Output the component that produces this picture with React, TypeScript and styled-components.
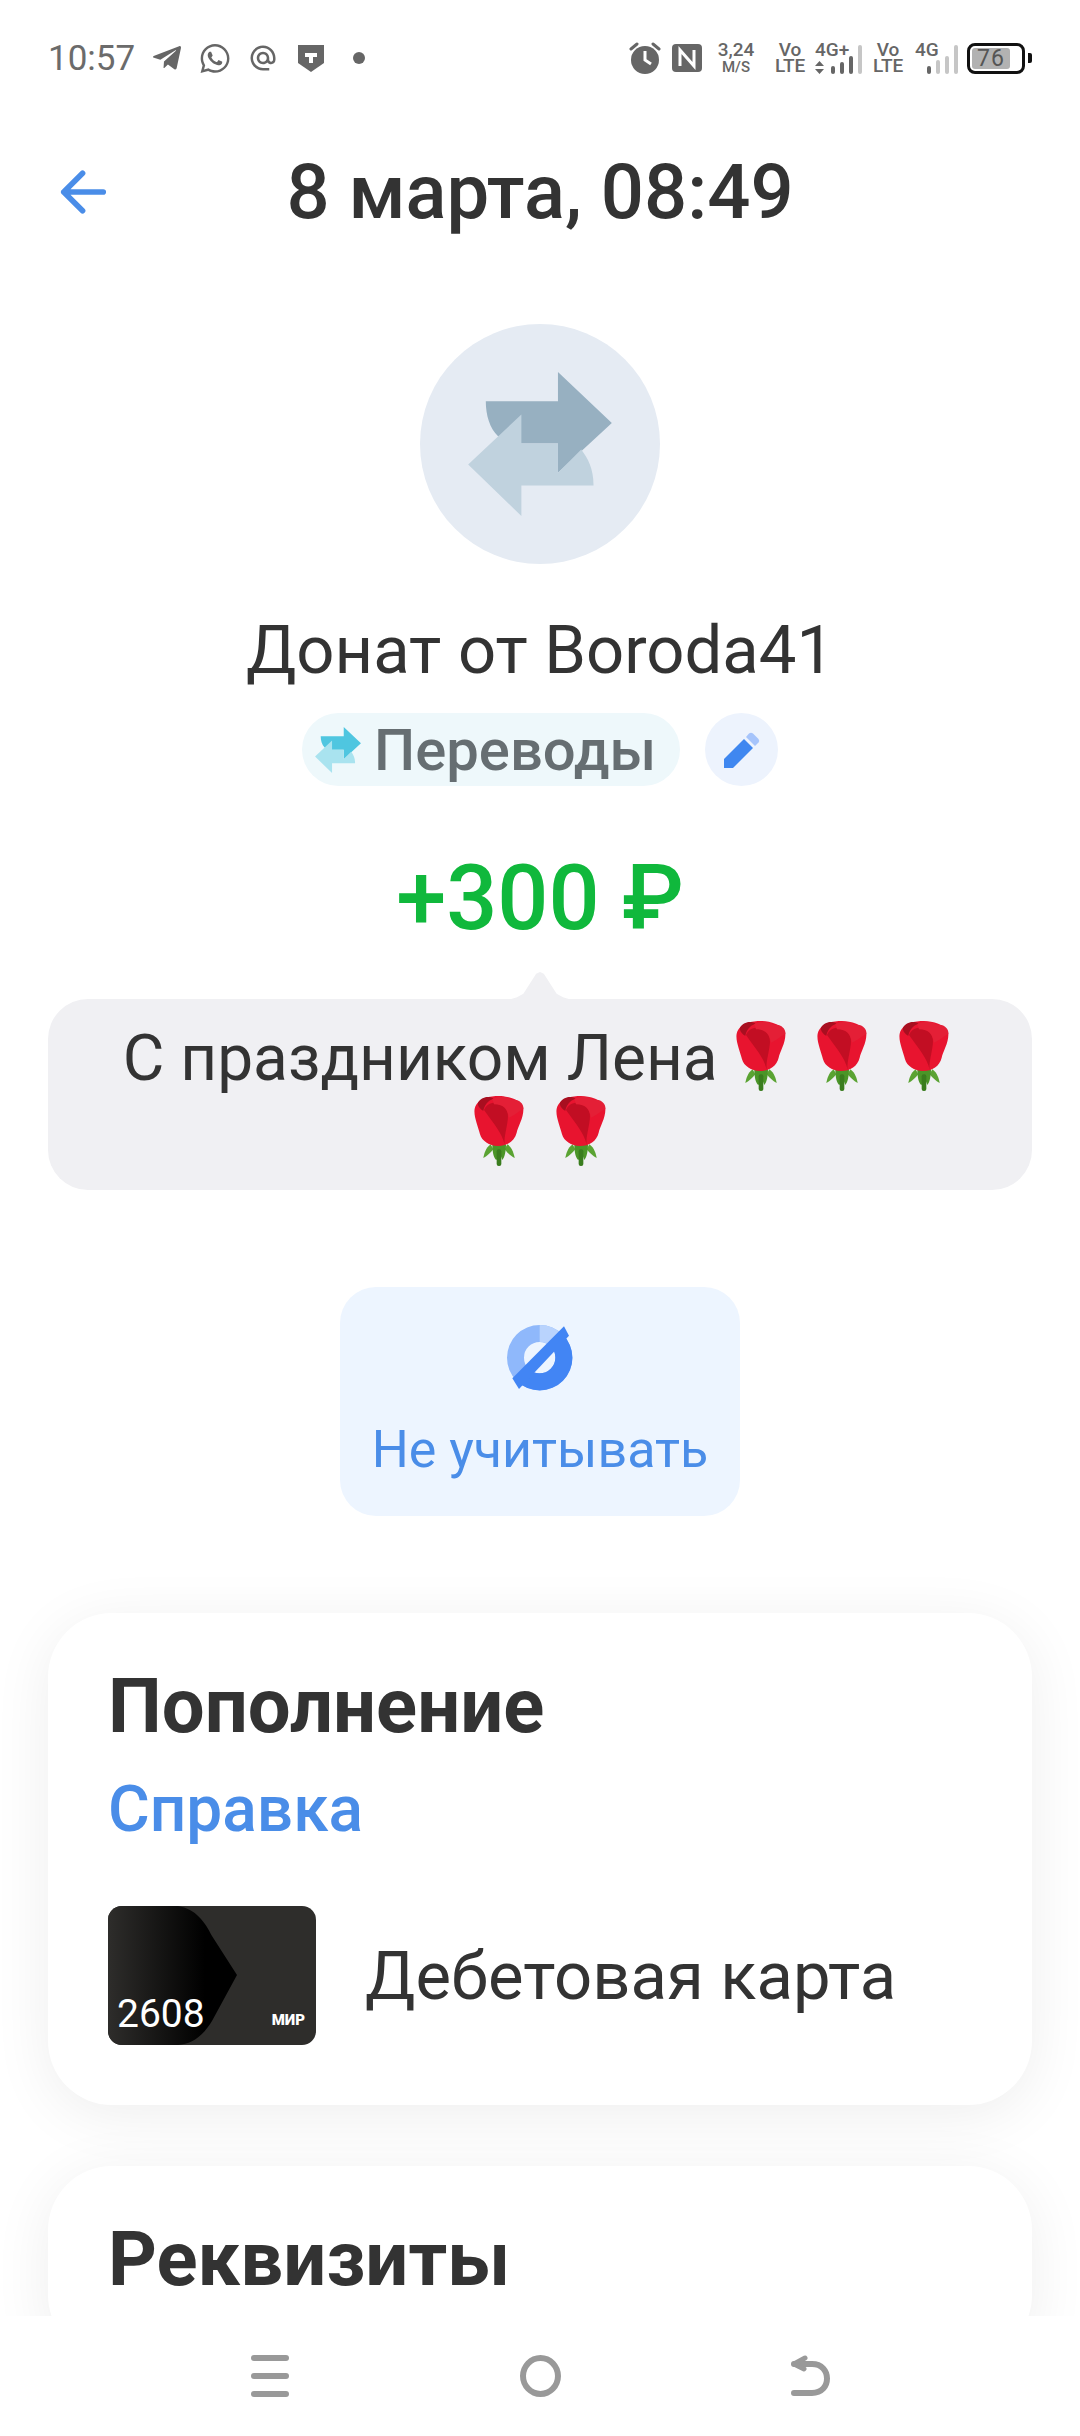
import styled, { createGlobalStyle } from 'styled-components';
import { FaTelegramPlane, FaWhatsapp } from 'react-icons/fa';
import { MdAlternateEmail } from 'react-icons/md';

const GlobalStyle = createGlobalStyle`
  html, body {
    margin: 0;
    padding: 0;
    background: #fff;
  }
  * {
    box-sizing: border-box;
  }
`;

const Screen = styled.div`
  width: 1080px;
  height: 2436px;
  display: flex;
  flex-direction: column;
  overflow: hidden;
  background: #fff;
  font-family: Roboto, 'Noto Sans', sans-serif;
  color: #333;
`;

const Content = styled.div`
  flex: 1;
  min-height: 0;
  overflow: hidden;
  display: flex;
  flex-direction: column;
  align-items: center;
`;

const StatusBar = styled.div`
  width: 100%;
  height: 116px;
  flex: none;
  padding: 0 48px;
  display: flex;
  align-items: center;
  justify-content: space-between;
  color: #666;
`;

const StatusGroup = styled.div`
  display: flex;
  align-items: center;
`;

const Time = styled.span`
  width: 89px;
  font-size: 35px;
  color: #6b6b6b;
  margin-right: 15px;
  white-space: nowrap;
`;

const StatusSlot = styled.span<{ $w: number; $gap?: number }>`
  width: ${({ $w }) => $w}px;
  margin-right: ${({ $gap }) => $gap ?? 0}px;
  display: flex;
  justify-content: center;
  align-items: center;
  flex: none;
`;

const Dot = styled.span`
  width: 12px;
  height: 12px;
  border-radius: 50%;
  background: #666;
`;

const Stack = styled.span<{ $w: number; $gap: number; $size?: number }>`
  width: ${({ $w }) => $w}px;
  margin-right: ${({ $gap }) => $gap}px;
  flex: none;
  font-size: ${({ $size }) => $size ?? 19}px;
  font-weight: 500;
  line-height: 16px;
  text-align: center;
`;

const StackSmall = styled.span`
  font-size: 15px;
`;

const Signal = styled.span<{ $w: number; $gap: number }>`
  position: relative;
  width: ${({ $w }) => $w}px;
  height: 32px;
  margin-right: ${({ $gap }) => $gap}px;
  flex: none;
`;

const SignalText = styled.span`
  position: absolute;
  left: 0;
  top: -2px;
  font-size: 19px;
  font-weight: 500;
  line-height: 20px;
`;

const UpDown = styled.svg`
  position: absolute;
  left: 0;
  bottom: 0;
`;

const Bars = styled.span`
  position: absolute;
  right: 0;
  bottom: 0;
  display: flex;
  align-items: flex-end;
  gap: 4.5px;
`;

const Bar = styled.span<{ $h: number; $on: boolean }>`
  width: 4.5px;
  height: ${({ $h }) => $h}px;
  border-radius: 2px;
  background: ${({ $on }) => ($on ? '#666' : '#c6c6c6')};
`;

const Battery = styled.span`
  position: relative;
  width: 58px;
  height: 31px;
  border: 3px solid #111;
  border-radius: 8px;
  margin-right: 3px;
  padding: 2px;
  display: flex;
  flex: none;
`;

const BatteryFill = styled.span`
  width: 38px;
  border-radius: 3px;
  background: #b2b2b2;
  font-size: 23px;
  line-height: 21px;
  text-align: center;
  color: #555;
  letter-spacing: 1px;
`;

const BatteryTip = styled.span`
  width: 4px;
  height: 10px;
  background: #111;
  border-radius: 0 2px 2px 0;
`;

const Header = styled.div`
  width: 100%;
  height: 152px;
  flex: none;
  padding: 0 60px;
  display: grid;
  grid-template-columns: 1fr auto 1fr;
  align-items: center;
`;

const Title = styled.h1`
  margin: 0;
  font-size: 76px;
  font-weight: 500;
  color: #333;
  white-space: nowrap;
`;

const Avatar = styled.div`
  width: 240px;
  height: 240px;
  margin-top: 56px;
  border-radius: 50%;
  background: #e5ebf3;
  display: flex;
  align-items: center;
  justify-content: center;
  flex: none;
`;

const Name = styled.div`
  margin-top: 48px;
  font-size: 67px;
  line-height: 76px;
  color: #333;
`;

const ChipRow = styled.div`
  margin-top: 25px;
  display: flex;
  gap: 25px;
`;

const Chip = styled.div`
  height: 73px;
  width: 378px;
  padding-left: 13px;
  border-radius: 37px;
  background: #eef8fb;
  display: flex;
  align-items: center;
  gap: 13px;
  font-size: 58px;
  font-weight: 500;
  color: #666e72;
`;

const EditButton = styled.div`
  width: 73px;
  height: 73px;
  border-radius: 50%;
  background: #edf3fd;
  display: flex;
  align-items: center;
  justify-content: center;
`;

const Amount = styled.div`
  margin-top: 63px;
  font-size: 90px;
  line-height: 100px;
  font-weight: 500;
  color: #10b83c;
`;

const Bubble = styled.div`
  position: relative;
  width: 984px;
  height: 191px;
  margin-top: 50px;
  padding: 22px 60px 19px;
  border-radius: 40px;
  background: #f0f0f3;
  font-size: 64px;
  line-height: 75px;
  text-align: center;
  color: #333;
  flex: none;
  &::before {
    content: '';
    position: absolute;
    left: 50%;
    top: -27px;
    width: 64px;
    height: 28px;
    transform: translateX(-50%);
    background: #f0f0f3;
    clip-path: polygon(0 100%, 14% 90%, 24% 78%, 44% 6%, 50% 0, 56% 6%, 76% 78%, 86% 90%, 100% 100%);
  }
`;

const Rose = styled.svg`
  width: 50px;
  height: 72px;
  vertical-align: -12px;
  margin: -4px 8px 0;
  &:first-of-type {
    margin-left: 18px;
  }
`;

const IgnoreButton = styled.div`
  width: 400px;
  height: 229px;
  margin-top: 97px;
  padding-top: 38px;
  border-radius: 36px;
  background: #edf5ff;
  display: flex;
  flex-direction: column;
  align-items: center;
  gap: 24px;
  font-size: 52px;
  line-height: 70px;
  color: #4a8de8;
  flex: none;
`;

const Card = styled.section`
  width: 984px;
  margin-top: 97px;
  padding: 53px 60px 60px;
  border-radius: 64px;
  background: #fff;
  box-shadow: 0 10px 60px rgba(0, 0, 0, 0.07);
  flex: none;
  & + & {
    margin-top: 61px;
  }
`;

const CardTitle = styled.h2`
  margin: 0;
  font-size: 76px;
  line-height: 80px;
  font-weight: 700;
  color: #333;
`;

const HelpLink = styled.div`
  margin-top: 29px;
  font-size: 64px;
  line-height: 70px;
  font-weight: 500;
  color: #4a8de8;
`;

const AccountRow = styled.div`
  margin-top: 61px;
  display: flex;
  align-items: center;
  gap: 49px;
  font-size: 67px;
  color: #333;
`;

const BankCard = styled.div`
  position: relative;
  width: 208px;
  height: 139px;
  border-radius: 14px;
  overflow: hidden;
  background: #2e2d2b;
  flex: none;
`;

const CardShape = styled.svg`
  position: absolute;
  inset: 0;
  width: 100%;
  height: 100%;
`;

const CardNumber = styled.span`
  position: absolute;
  left: 9px;
  bottom: 9px;
  font-size: 39px;
  line-height: 44px;
  color: #fff;
`;

const MirLabel = styled.span`
  position: absolute;
  right: 11px;
  bottom: 16px;
  font-size: 15px;
  line-height: 18px;
  font-weight: 900;
  color: #fff;
`;

const NavBar = styled.nav`
  height: 120px;
  flex: none;
  background: #fff;
  display: grid;
  grid-template-columns: repeat(3, 270px);
  justify-content: center;
  align-items: center;
  justify-items: center;
`;

const NavLines = styled.div`
  width: 38px;
  height: 42px;
  display: flex;
  flex-direction: column;
  justify-content: space-between;
`;

const NavLine = styled.span`
  height: 6px;
  border-radius: 3px;
  background: #999;
`;

const NavCircle = styled.div`
  width: 41px;
  height: 42px;
  border: 6px solid #999;
  border-radius: 50%;
`;

const ArrowsIcon = ({ size, dark, light }: { size: number; dark: string; light: string }) => (
  <svg width={size} height={size} viewBox="0 0 432 433">
    <path d="M53 88H270V0L432 153L270 303V215H160L90 193C65 170 53 130 53 88Z" fill={dark} />
    <path d="M160 128L0 278L160 433V341H377C377 290 360 260 340 233L270 303V215H160Z" fill={light} />
  </svg>
);

const RoseIcon = () => (
  <Rose viewBox="0 0 150 210">
    <path d="M50 145C35 155 30 175 28 186C40 180 50 170 58 160Z" fill="#5aa332" />
    <path d="M100 145C115 155 120 175 122 186C110 180 100 170 92 160Z" fill="#5aa332" />
    <path d="M55 145C55 170 60 190 68 192L75 165L85 192C92 185 96 165 96 145Z" fill="#4b9528" />
    <rect x="68" y="160" width="14" height="50" rx="6" fill="#3a7d1e" />
    <path d="M2 38C-2 60 12 90 18 115C24 135 45 150 72 150C100 150 122 135 128 110C132 90 150 65 148 36C140 10 100 0 75 0C50 0 10 5 2 38Z" fill="#e8142f" />
    <path d="M12 20C24 0 50 0 58 8C40 14 30 30 28 44C20 40 10 30 12 20Z" fill="#a80f20" />
    <path d="M30 42C40 20 60 15 85 25C100 35 105 55 100 80C95 110 90 125 92 146C84 110 60 85 30 42Z" fill="#c20e23" />
    <path d="M55 10C70 -2 100 0 115 12C135 8 150 25 148 38C130 50 115 60 105 65C100 40 90 25 60 25Z" fill="#e41f36" />
  </Rose>
);

const StatusIcons = () => (
  <StatusGroup>
    <StatusSlot $w={32} $gap={11}>
      <svg width="32" height="32" viewBox="0 0 32 32">
        <path d="M2 7L8 2M30 7L24 2" stroke="#666" strokeWidth="3" strokeLinecap="round" />
        <circle cx="16" cy="18" r="14" fill="#666" />
        <path d="M16 9V18L22 22" stroke="#fff" strokeWidth="3" fill="none" />
      </svg>
    </StatusSlot>
    <StatusSlot $w={30} $gap={15}>
      <svg width="30" height="28" viewBox="0 0 30 28">
        <rect width="30" height="28" rx="4" fill="#666" />
        <path d="M8 22V6L22 22V6" stroke="#fff" strokeWidth="3" fill="none" />
      </svg>
    </StatusSlot>
    <Stack $w={38} $gap={20}>
      3,24<br />
      <StackSmall>M/S</StackSmall>
    </Stack>
    <Stack $w={30} $gap={10}>
      Vo<br />LTE
    </Stack>
    <Signal $w={47} $gap={11}>
      <SignalText>4G+</SignalText>
      <UpDown width="9" height="13" viewBox="0 0 9 13">
        <path d="M4.5 0L9 5H0ZM4.5 13L9 8H0Z" fill="#666" />
      </UpDown>
      <Bars>
        <Bar $h={8} $on />
        <Bar $h={12} $on />
        <Bar $h={18} $on />
        <Bar $h={29} $on={false} />
      </Bars>
    </Signal>
    <Stack $w={30} $gap={12}>
      Vo<br />LTE
    </Stack>
    <Signal $w={43} $gap={9}>
      <SignalText>4G</SignalText>
      <Bars>
        <Bar $h={8} $on />
        <Bar $h={14} $on={false} />
        <Bar $h={18} $on={false} />
        <Bar $h={29} $on={false} />
      </Bars>
    </Signal>
    <Battery>
      <BatteryFill>76</BatteryFill>
    </Battery>
    <BatteryTip />
  </StatusGroup>
);

const App = () => {
  return (
    <Screen>
      <GlobalStyle />
      <Content>
        <StatusBar>
          <StatusGroup>
            <Time>10:57</Time>
            <StatusSlot $w={30} $gap={18}>
              <FaTelegramPlane size={32} color="#666" />
            </StatusSlot>
            <StatusSlot $w={30} $gap={18}>
              <FaWhatsapp size={33} color="#666" />
            </StatusSlot>
            <StatusSlot $w={30} $gap={20}>
              <MdAlternateEmail size={34} color="#666" />
            </StatusSlot>
            <StatusSlot $w={26} $gap={29}>
              <svg width="26" height="27" viewBox="0 0 26 27">
                <path d="M0 0H26V18L13 27L0 18Z" fill="#666" />
                <path d="M7 8H19V12H15V18H11V12H7Z" fill="#fff" />
              </svg>
            </StatusSlot>
            <Dot />
          </StatusGroup>
          <StatusIcons />
        </StatusBar>

        <Header>
          <svg width="47" height="46" viewBox="0 0 50 48">
            <path d="M46 24H4M24 4L4 24L24 44" stroke="#4a8de8" strokeWidth="6" strokeLinecap="round" strokeLinejoin="round" fill="none" />
          </svg>
          <Title>8 марта, 08:49</Title>
        </Header>

        <Avatar>
          <ArrowsIcon size={144} dark="#97b0c1" light="#c0d2de" />
        </Avatar>
        <Name>Донат от Boroda41</Name>
        <ChipRow>
          <Chip>
            <ArrowsIcon size={46} dark="#4fc6e0" light="#a9e3ef" />
            Переводы
          </Chip>
          <EditButton>
            <svg width="36" height="36" viewBox="0 0 36 36">
              <path d="M0 27L20 7L29 16L9 36H0Z" fill="#3f87f0" />
              <path d="M22 5L25 1.5Q27 0 29 1.5L34.5 7Q36 9 34.5 10.5L31 14Z" fill="#a6c4fb" />
            </svg>
          </EditButton>
        </ChipRow>
        <Amount>+300 ₽</Amount>

        <Bubble>
          С праздником Лена<RoseIcon /> <RoseIcon /> <RoseIcon /> <RoseIcon /> <RoseIcon />
        </Bubble>

        <IgnoreButton>
          <svg width="66" height="66" viewBox="0 0 198 198">
            <path fillRule="evenodd" d="M98 0a98 98 0 1 0 0 196a98 98 0 1 0 0-196ZM98 51a47 47 0 1 1 0 94a47 47 0 1 1 0-94Z" fill="#8fb8fb" />
            <path d="M98 0A98 98 0 0 1 165 27L132 65A47 47 0 0 0 98 51Z" fill="#b9d3fd" />
            <path d="M167 28A98 98 0 0 1 29 168L64 131A47 47 0 0 0 131 64Z" fill="#4285f4" />
            <path d="M171 4L186 32L36 192L16 160Z" fill="#4285f4" />
          </svg>
          Не учитывать
        </IgnoreButton>

        <Card>
          <CardTitle>Пополнение</CardTitle>
          <HelpLink>Справка</HelpLink>
          <AccountRow>
            <BankCard>
              <CardShape viewBox="0 0 208 139">
                <defs>
                  <linearGradient id="card-fade" x1="0" x2="1" y1="0" y2="0">
                    <stop offset="0" stopColor="#2e2d2b" />
                    <stop offset="0.75" stopColor="#000" />
                  </linearGradient>
                </defs>
                <path d="M0 0H70C88 3 97 16 104 30L129 69L104 115C95 130 84 138 70 139H0Z" fill="url(#card-fade)" />
              </CardShape>
              <CardNumber>2608</CardNumber>
              <MirLabel>МИР</MirLabel>
            </BankCard>
            Дебетовая карта
          </AccountRow>
        </Card>

        <Card>
          <CardTitle>Реквизиты</CardTitle>
        </Card>
      </Content>

      <NavBar>
        <NavLines>
          <NavLine />
          <NavLine />
          <NavLine />
        </NavLines>
        <NavCircle />
        <svg width="39" height="42" viewBox="0 0 39 42">
          <path d="M3 9H21C31 9 36 16 36 23.5C36 31 31 38 21 38H3" stroke="#999" strokeWidth="6" fill="none" strokeLinecap="round" />
          <path d="M14 3L3 9L13 14" stroke="#999" strokeWidth="5" fill="none" strokeLinecap="round" strokeLinejoin="round" />
        </svg>
      </NavBar>
    </Screen>
  );
};

export default App;
